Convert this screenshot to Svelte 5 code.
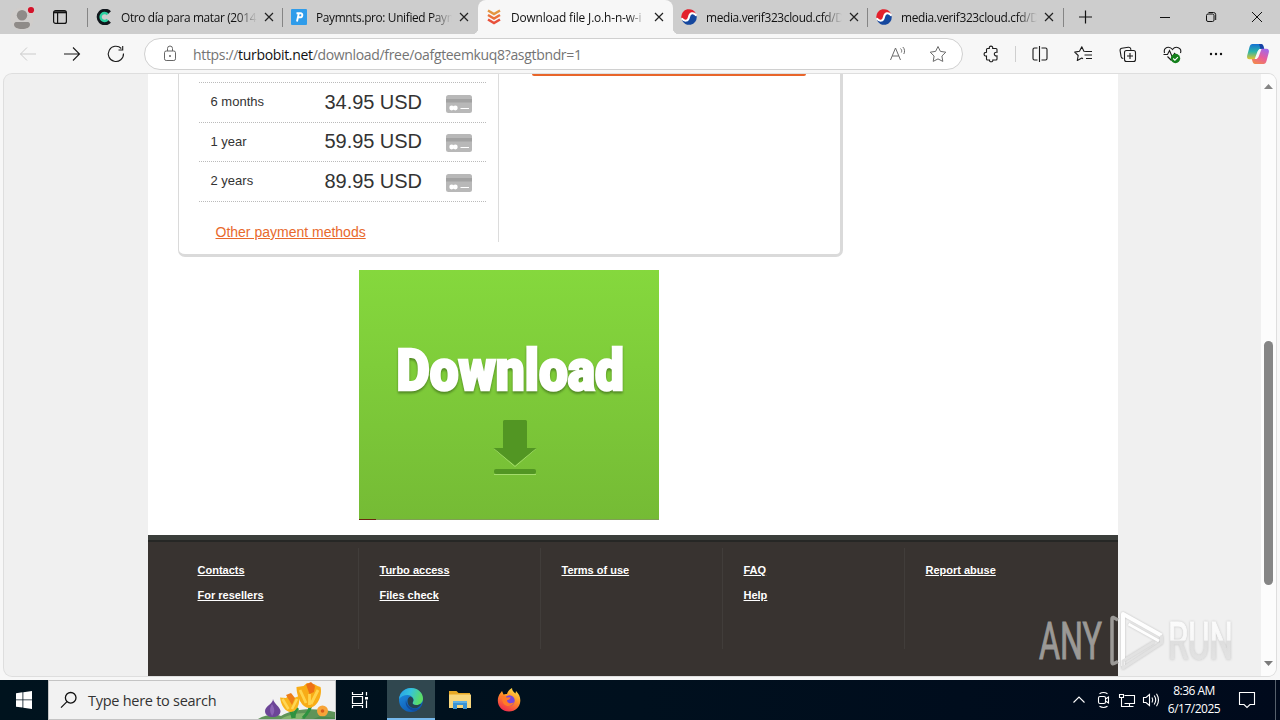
<script>
  const tabs = [
    { icon: 'c', title: 'Otro día para matar (2014', ls: -0.36 },
    { icon: 'p', title: 'Paymnts.pro: Unified Paym', ls: -0.36 },
    { icon: 't', title: 'Download file J.o.h-n-w-i', ls: -0.15, active: true },
    { icon: 'k', title: 'media.verif323cloud.cfd/D', ls: -0.34 },
    { icon: 'k', title: 'media.verif323cloud.cfd/D', ls: -0.34 }
  ];
  const plans = [
    { term: '6 months', price: '34.95 USD' },
    { term: '1 year', price: '59.95 USD' },
    { term: '2 years', price: '89.95 USD' }
  ];
  const footer = [
    ['Contacts', 'For resellers'],
    ['Turbo access', 'Files check'],
    ['Terms of use'],
    ['FAQ', 'Help'],
    ['Report abuse']
  ];
</script>

<div class="screen">
  <header class="tabbar">
    <div class="lead">
      <svg class="avatar" width="28" height="28" viewBox="0 0 28 28">
        <circle cx="14" cy="15" r="11.500" fill="#d0cdcb" />
        <circle cx="14" cy="11.300" r="5.200" fill="#8f8b88" />
        <path d="M6 20.500c0-2 1.500-2.500 3-2.500h10c1.500 0 3 .5 3 2.500 0 3-3.500 4.500-8 4.500s-8-1.500-8-4.500z" fill="#8f8b88" />
        <circle cx="23" cy="6" r="4" fill="#d9cbca" />
        <circle cx="23" cy="6" r="3.100" fill="#d3122a" />
      </svg>
      <svg class="wsp" width="16" height="16" viewBox="0 0 16 16" fill="none" stroke="#111" stroke-width="1.200">
        <rect x="1.600" y="1.600" width="12.800" height="12.800" rx="2" /><path d="M2 3.300h12" stroke-width="2" /><path d="M5.600 4v10" />
      </svg>
    </div>
    {#each tabs as t, i}
      <div class="tab" class:active={t.active} class:line={i < 2 || i === 4} class:last={i === 4}>
        <svg class="fav" width="16" height="16" viewBox="0 0 16 16">
          {#if t.icon === 'c'}
            <path d="M13.500 3.600A6.300 6.300 0 1 0 13.500 12.400" fill="none" stroke="#11171c" stroke-width="4" />
            <path d="M11.600 5.400A4 4 0 1 0 11.600 10.600" fill="none" stroke="#2ccfa0" stroke-width="2.400" />
          {:else if t.icon === 'p'}
            <rect width="16" height="16" rx="1" fill="#2f9cea" />
            <path d="M5.500 4.300h4c2.700 0 2.300 4-.6 4H6.600M7.800 4.200L6 12.500" fill="none" stroke="#fff" stroke-width="1.900" />
          {:else if t.icon === 't'}
            <path d="M2 1.500L8 5l6-3.500" fill="none" stroke="#e3953f" stroke-width="2.500" />
            <path d="M2 6L8 9.500 14 6" fill="none" stroke="#ea7038" stroke-width="2.500" />
            <path d="M2 10.500L8 14l6-3.500" fill="none" stroke="#e8503a" stroke-width="2.500" />
          {:else}
            <path d="M.3 8.500A7.700 7.700 0 0 1 15.200 5.200C12 3 9 4 8 8S3 12.500.3 8.500z" fill="#e3202c" />
            <path d="M15.700 7.500A7.700 7.700 0 0 1 .8 10.800C4 13 7 12 8 8s5-4.500 7.700-.5z" fill="#15479e" />
            <path d="M.7 9.300C4 13.300 7.200 12 8 8s4-5.300 7.400-1.500" fill="none" stroke="#fff" stroke-width="2" />
          {/if}
        </svg>
        <span class="title" style:letter-spacing="{t.ls}px">{t.title}</span>
        <svg class="x" width="12" height="12" viewBox="0 0 12 12" stroke="#222" stroke-width="1.200"><path d="M2 2l8 8M10 2l-8 8" /></svg>
      </div>
    {/each}
    <svg class="plus" width="44" height="34" viewBox="0 0 44 34" stroke="#111" stroke-width="1.200"><path d="M22.500 10.500v13M16 17h13" /></svg>
    <svg class="win" width="46" height="34" viewBox="0 0 46 34" stroke="#111"><path d="M18 17.500h10" /></svg>
    <svg width="46" height="34" viewBox="0 0 46 34" fill="none" stroke="#111"><rect x="18.500" y="14" width="7.500" height="7.500" rx="1.500" /><path d="M20.500 12.500h5a2.200 2.200 0 0 1 2.200 2.200V20" /></svg>
    <svg width="46" height="34" viewBox="0 0 46 34" stroke="#111"><path d="M18 12l10 10M28 12l-10 10" /></svg>
  </header>

  <nav class="toolbar">
    <svg class="b" viewBox="0 0 44 40" stroke="#cbcbcb"><path d="M30 20H14.500M21 13.500L14.500 20l6.500 6.500" /></svg>
    <svg class="b" viewBox="0 0 44 40"><path d="M14 20h15.500M23 13.500l6.500 6.500-6.500 6.500" /></svg>
    <svg class="b" viewBox="0 0 44 40"><path d="M29.500 19.500a7.600 7.600 0 1 1-2.200-5M28.700 12v4h-4.200" /></svg>
    <div class="address">
      <svg class="lock" width="16" height="18" viewBox="0 0 16 18" fill="none" stroke="#666"><rect x="2.500" y="6" width="11" height="9.500" rx="1.700" /><path d="M5.500 6V3.500a2.500 2.500 0 0 1 5 0V6" /><circle cx="8" cy="11" r=".6" fill="#666" /></svg>
      <span class="url">https://<b>turbobit.net</b>/download/free/oafgteemkuq8?asgtbndr=1</span>
      <svg class="ai" width="40" height="30" viewBox="0 0 40 30" fill="none" stroke="#6b6b6b"><path d="M12.500 21l5-12 5 12M14.200 17h6.600M22.500 9.500c1.200 1 1.500 2.700.8 4M24.800 8c1.900 1.700 2.300 4.800 1 7" /></svg>
      <svg class="ai" width="40" height="30" viewBox="0 0 40 30" fill="none" stroke="#6b6b6b"><path d="M20 7.500l2.400 4.900 5.400.8-3.900 3.800.9 5.400-4.800-2.500-4.800 2.500.9-5.400-3.900-3.800 5.400-.8z" stroke-linejoin="round" /></svg>
    </div>
    <svg class="b ext" viewBox="0 0 44 40"><path d="M18.500 14.500h1.800c-.6-3.200 4-3.200 3.400 0h3.300a1 1 0 0 1 1 1v2.800c-3.600-.6-3.600 4.200 0 3.600V25a1 1 0 0 1-1 1h-3.200c.5 2.300-3.800 2.300-3.300 0h-2a1 1 0 0 1-1-1v-3c-3.200.5-3.200-4.200 0-3.700v-2.800a1 1 0 0 1 1-1z" /></svg>
    <i class="vsep"></i>
    <svg class="b" viewBox="0 0 44 40"><path d="M19.500 14h-3a1.500 1.500 0 0 0-1.500 1.500v9a1.500 1.500 0 0 0 1.500 1.500h3M23.500 14h4a1.500 1.500 0 0 1 1.500 1.500v9a1.500 1.500 0 0 1-1.500 1.500h-4M21.500 12v16" /></svg>
    <svg class="b" viewBox="0 0 44 40"><path d="M24.500 17.500l-2.600-.3L19.800 12.700l-2.300 4.600-4.800.8 3.500 3.400-.9 5 4.500-2.400 1.200.7M24 17.500h6M22.500 21h7.500M24 24.500h6" stroke-linejoin="round" /></svg>
    <svg class="b" viewBox="0 0 44 40"><path d="M17.300 24.500c-1.300 0-2-.8-2.200-1.800l-1-6c-.2-1.200.5-2.200 1.700-2.400l6.500-1c1.200-.2 2.300.5 2.500 1.800l.1.700" /><rect x="18.500" y="16.500" width="11" height="11" rx="2" /><path d="M24 19v6M21 22h6" /></svg>
    <svg class="b" viewBox="0 0 44 40"><path d="M21.500 26.500l-4-4M14.500 19c-1.500-6 5-7.500 8-3.500 3-4 9.800-2 8 3.500M13.500 20.500h4l2-4 3 7 2-4 1.500 1.500" /><circle cx="25.500" cy="24.500" r="4.700" fill="#14801c" stroke="none" /><path d="M23.200 24.500l1.700 1.700 3-3" stroke="#fff" /></svg>
    <svg class="b" viewBox="0 0 44 40" stroke="none"><g fill="#111"><circle cx="17" cy="20" r="1.200" /><circle cx="22" cy="20" r="1.200" /><circle cx="27" cy="20" r="1.200" /></g></svg>
    <svg class="cop" width="40" height="40" viewBox="0 0 40 40">
      <defs>
        <linearGradient id="ca" x1="0" y1="0" x2="0" y2="1"><stop offset="0" stop-color="#1470d4" /><stop offset=".5" stop-color="#2bb5a8" /><stop offset="1" stop-color="#e6c52c" /></linearGradient>
        <linearGradient id="cb" x1="0.700" y1="0" x2=".2" y2="1"><stop offset="0" stop-color="#a368e8" /><stop offset=".5" stop-color="#e85c9b" /><stop offset="1" stop-color="#f38a4a" /></linearGradient>
      </defs>
      <path d="M14.500 10h8.500c1.500 0 2 1 2.400 2.200l.8 2.800h-3.200c-1.500 0-2.300.8-2.800 2.200l-2 6.200c-.5 1.300-1.200 1.900-2.700 1.900h-4c-2.300 0-2.800-2-2.300-3.900l2.300-8.500C12 11 13 10 14.500 10z" fill="url(#ca)" />
      <path d="M21 10h2c1.500 0 2 1 2.400 2.200l.8 2.800h-3.700z" fill="#1742a5" />
      <path d="M25.500 30H17c-1.500 0-2-1-2.400-2.200L13.800 25H17c1.500 0 2.300-.8 2.800-2.200l2-6.200c.5-1.300 1.200-1.900 2.700-1.900h4c2.300 0 2.800 2 2.300 3.900l-2.300 8.500c-.5 1.900-1.500 2.900-3 2.900z" fill="url(#cb)" />
      <path d="M19.500 17.500l1.800-2.500h2.200l-3 8-1.800 2h-2z" fill="#f7f7f7" />
    </svg>
  </nav>

  <main class="frame">
    <div class="page">
      <section class="card">
        <div class="plans">
          {#each plans as p}
            <div class="plan">
              <span class="term">{p.term}</span>
              <span class="price">{p.price}</span>
              <svg width="26" height="18" viewBox="0 0 26 18"><rect width="26" height="18" rx="2.500" fill="#b8b8b8" /><path d="M0 4h26v3.500H0z" fill="#a2a2a2" /><circle cx="5.700" cy="13" r="2.400" fill="#fff" /><circle cx="9.300" cy="13" r="2.400" fill="#fff" /><path d="M14.500 13.500H23" stroke="#fff" stroke-width="1.200" /></svg>
            </div>
          {/each}
          <a class="other" href="#methods">Other payment methods</a>
        </div>
        <div class="free"><div class="cta"></div></div>
      </section>

      <div class="banner">
        <svg width="300" height="250" viewBox="0 0 300 250">
          <g class="word" font-family="Roboto, sans-serif" font-weight="900" font-size="57.500" stroke-width="2.600" stroke-linejoin="miter">
            <text x="37.500" y="120" textLength="227.500" lengthAdjust="spacingAndGlyphs" fill="#fff" stroke="#fff">Download</text>
          </g>
          <path d="M135 178.500L156 196.500 177 178.500M135 204.500h42" fill="none" stroke="#a4dc6c" />
          <path d="M145.500 150h21q1.500 0 1.500 1.500V178h9.500L156 195.500 134.500 178H144v-26.500q0-1.500 1.500-1.500z" fill="#529623" />
          <rect x="135" y="199" width="42" height="5" rx="2" fill="#529623" />
          <path d="M0 249.500h300" stroke="#7f9f55" /><path d="M0 249.500h17" stroke="#6b2710" />
        </svg>
      </div>

      <footer>
        {#each footer as col}
          <div class="col">
            {#each col as l}<a href="#{l}">{l}</a>{/each}
          </div>
        {/each}
      </footer>
    </div>
    <div class="scroll">
      <svg width="15" height="24" viewBox="0 0 15 24"><path d="M3 15l4.500-5 4.500 5z" fill="#858585" /></svg>
      <i class="thumb"></i>
      <svg width="15" height="24" viewBox="0 0 15 24"><path d="M3 9l4.500 5L12 9z" fill="#7b7b7b" /></svg>
    </div>
  </main>

  <div class="taskbar">
    <svg width="48" height="40" viewBox="0 0 48 40" fill="#fff"><path d="M16 13.200l6.500-.9v7.200H16zM23.300 12.200L32 11v8.500h-8.700zM16 20.300h6.500v7.300l-6.500-.9zM23.300 20.300H32V29l-8.700-1.200z" /></svg>
    <div class="search">
      <svg width="18" height="18" viewBox="0 0 18 18" fill="none" stroke="#111" stroke-width="1.300"><circle cx="10.700" cy="6.800" r="5.300" /><path d="M7 10.600l-6 6" /></svg>
      <span>Type here to search</span>
      <svg class="flowers" width="80" height="38" viewBox="0 0 80 38">
        <path d="M3 38c8-5 18-5 23-3 10-7 32-9 54-4v7z" fill="#5f9459" />
        <path d="M26 38c8-5 18-6 28-6l-8 6z" fill="#82b56c" />
        <path d="M18 18c0 5-8 7-8 12 0 8 15.500 8 15.500 0C25 25.500 19 23 18 18z" fill="#6c4597" /><path d="M17 23c-3 5-2 8 0 12 3-4 3-7 0-12z" fill="#8a63b4" />
        <path d="M35 26l3 11M56 22c0 6-3 10-8 15M43 27c-3 3-4 7-4 10" stroke="#2e9340" stroke-width="3" fill="none" />
        <g transform="translate(1 0)">
          <path d="M24 16.500l6 .5 3-3 5 3 5-2c1 7-1 15-8 16-6 0-10-7-11-14.500z" fill="#f9b51c" />
          <path d="M30 14l5-2 4 5-3 7z" fill="#ee7d18" /><path d="M26.500 18l6 10M41 18l-5 10" stroke="#ffd654" stroke-width="2.500" />
          <path d="M40.500 6l7-1 3.500-3 7 1 3.500 2 3 1c2 7-2 20-11 21-8 0-13-12-13-21z" fill="#f8ac16" />
          <path d="M50 3.500l5-2.500 4 4-1 6-4.500 2z" fill="#ee7115" /><path d="M44 9l6 13M62 9l-7 14M53.500 13v11" stroke="#ffd34b" stroke-width="2.800" />
        </g>
        <circle cx="67.500" cy="30" r="5.500" fill="#f7a438" /><circle cx="67.500" cy="30" r="1.800" fill="#d85d1c" />
        <path d="M61 37c5-3 12-1 19 0v1H58z" fill="#4a8a4c" />
      </svg>
    </div>
    <svg width="51" height="40" viewBox="0 0 51 40" fill="none" stroke="#fff" stroke-width="1.200"><path d="M16.500 12v2.500h10V12M16.500 28v-2.500h10V28M16.500 16.500h10v7h-10zM30.500 12v3.500M30.500 20.500V28" /><path d="M29 17h3v2.500h-3z" fill="#fff" stroke="none" /></svg>
    <div class="app on">
      <svg width="26" height="26" viewBox="0 0 26 26">
        <defs>
          <linearGradient id="ea" x1="0" y1="0" x2="1" y2=".3"><stop offset="0" stop-color="#259ee8" /><stop offset=".5" stop-color="#35c2dc" /><stop offset="1" stop-color="#5bdc65" /></linearGradient>
          <linearGradient id="eb" x1="0" y1="0" x2="0.600" y2="1"><stop offset="0" stop-color="#2194e6" /><stop offset="1" stop-color="#0d58b0" /></linearGradient>
        </defs>
        <circle cx="13" cy="13" r="12" fill="url(#eb)" />
        <path d="M1 12C2 5 7 1 13 1c7 0 12 5 12 10.500 0 4-3 6.500-6.500 6.500-3 0-4.500-1-3.800-2.400C17 12 14 8 9.500 8 6 8 3 9.500 1 12z" fill="url(#ea)" />
        <path d="M9.500 14c0-2 1-3.700 2.800-4.500 3 1 4 3.700 2.400 6-.7 1.500.8 2.600 3.800 2.600 2 0 4-.8 5-1.600-1 2-3 4-4.700 4.500-5 1-9.300-2-9.300-7z" fill="#27414f" />
        <path d="M8 13c-1.500 6 3 10.500 8 10.800 2 0 4-.6 6-2.800-6 2-13 0-14-8z" fill="#124b9b" />
      </svg>
    </div>
    <div class="app">
      <svg width="24" height="22" viewBox="0 0 24 22"><path d="M1 2h7.500l2 2H22v5H1z" fill="#e7a825" /><path d="M1 5.500h22V19H1z" fill="#f8d67c" /><path d="M5 12h14v8h-4v-4H9v4H5z" fill="#3a93d4" /><path d="M5 12h14v2H5z" fill="#5fb0e4" /></svg>
    </div>
    <div class="app">
      <svg width="24" height="26" viewBox="0 0 24 26">
        <defs><linearGradient id="fa" x1=".8" y1="0" x2=".3" y2="1"><stop offset="0" stop-color="#ffe44a" /><stop offset=".45" stop-color="#ff9326" /><stop offset="1" stop-color="#f0294e" /></linearGradient></defs>
        <path d="M3.500 6L5 4l1.500 3.500C8 6.800 9 6.800 10 7c1-3 3-5 5-6 0 3 2 4 3.500 5.500L19 4c3 3 4.500 6 4.300 10-.3 6-5 10.500-11.300 10.500S.8 20 .8 13.500c0-3 1-5.500 2.700-7.500z" fill="url(#fa)" />
        <circle cx="12.500" cy="13.500" r="5.200" fill="#7647dc" /><path d="M3 9c3-1 5 0 6.500 1.500l4-.3c0 2-2 2.800-3.500 3 0 3 4 4 7 2-1 4-7 5-10 2C5 15 6 12 3 9z" fill="#ff7a28" />
      </svg>
    </div>
    <div class="tray">
      <svg width="24" height="40" viewBox="0 0 24 40"><path d="M6.500 22.500L12 17l5.500 5.500" /></svg>
      <svg width="24" height="40" viewBox="0 0 24 40"><rect x="7.500" y="16.500" width="7" height="7" rx="1.500" /><path d="M14.500 19l3-2v6l-3-2M8.500 13.700q4-2.500 8 0M8.500 26.300q4 2.500 8 0" /></svg>
      <svg width="24" height="40" viewBox="0 0 24 40"><path d="M9.500 15.500h10v8h-10M14.500 23.500v3M10.500 26.500h8M4.500 14.500h4v3h-4zM6.500 17.500v9h4" /></svg>
      <svg width="24" height="40" viewBox="0 0 24 40"><path d="M4.500 17.500H7l3.500-3v11L7 22.500H4.500zM13 17.500q1.500 2.500 0 5M15.200 15.500q3 4.500 0 9M17.500 13.700q4 6.300 0 12.600" /></svg>
      <div class="clock"><span>8:36 AM</span><span>6/17/2025</span></div>
      <svg class="note" width="48" height="40" viewBox="0 0 48 40"><path d="M16.500 12.500h15v12H27l-3 3-3-3h-4.500z" /></svg>
      <i class="peek"></i>
    </div>
  </div>

  <svg class="mark" width="204" height="70" viewBox="0 0 204 70">
    <defs>
      <linearGradient id="wm" gradientUnits="userSpaceOnUse" x1="0" y1="15" x2="0" y2="55"><stop offset="0" stop-color="#fbfbfb" /><stop offset=".48" stop-color="#f8f8f8" /><stop offset=".5" stop-color="#dedede" /><stop offset="1" stop-color="#e3e3e3" /></linearGradient>
    </defs>
    <g font-family="Roboto, sans-serif" font-size="51">
      <text x="2" y="52.500" textLength="63" lengthAdjust="spacingAndGlyphs" fill="#9b9996" stroke="#9b9996" stroke-width="1">ANY</text>
      <text x="131" y="52.500" textLength="65" lengthAdjust="spacingAndGlyphs" fill="url(#wm)" stroke="url(#wm)" stroke-width="1" class="run">RUN</text>
    </g>
    <path d="M81 14L76.500 11.500Q75 11 75 13v43q0 2.500 2 1.500l4-2" fill="none" stroke="#9b9996" stroke-width="3.500" />
    <g class="play" fill="none" stroke-linejoin="round" stroke-width="4">
      <path d="M86 60V8l38.500 21.500" stroke="#fff" />
      <path d="M91.500 18L122 35" stroke="#fff" stroke-width="3" />
      <path d="M124.500 29.500v7.500L86 62v-7l31-19" stroke="#e2e2e2" stroke-width="3" />
    </g>
  </svg>
</div>

<style>
  :global(body) { margin: 0; overflow: hidden; }
  .screen { width: 1280px; height: 720px; display: flex; flex-direction: column; position: relative; overflow: hidden; background: #f7f7f7; font-family: 'Open Sans', 'Noto Sans', sans-serif; }
  svg { display: block; flex: none; }
  .tabbar { height: 34px; flex: none; background: #cdcdcd; display: flex; }
  .lead { width: 88px; flex: none; display: flex; align-items: center; gap: 16px; padding-left: 8px; box-sizing: border-box; }
  .avatar { margin-top: 1px; }
  .tab { width: 195px; flex: none; box-sizing: border-box; display: flex; align-items: center; padding-left: 8px; position: relative; }
  .tab.line::before, .tab.last::after { content: ''; position: absolute; left: -1px; top: 8px; width: 1px; height: 19px; background: #858585; }
  .tab.last::after { left: 195px; }
  .tab.active { background: #f7f7f7; border-radius: 8px 8px 0 0; }
  .tab.active::before, .tab.active::after { content: ''; position: absolute; bottom: 0; width: 6px; height: 6px; }
  .tab.active::before { left: -6px; background: radial-gradient(circle at 0 0, #cdcdcd 6px, #f7f7f7 6.500px); }
  .tab.active::after { right: -6px; background: radial-gradient(circle at 100% 0, #cdcdcd 6px, #f7f7f7 6.500px); }
  .title { margin-left: 9px; width: 136px; font-size: 11.900px; line-height: 16px; color: #111; white-space: nowrap; -webkit-mask-image: linear-gradient(90deg, #000 116px, transparent 136px); }
  .x { margin-left: 5.500px; }
  .win { margin-left: auto; }
  .toolbar { height: 40px; flex: none; display: flex; align-items: center; padding-left: 6px; box-sizing: border-box; background: #f7f7f7; }
  .b { width: 44px; height: 40px; fill: none; }
  .b:not([stroke]) { stroke: #1b1b1b; stroke-width: 1.100; }
  .address { width: 819px; height: 32px; margin-left: 6px; box-sizing: border-box; border: 1px solid #d0d0d0; border-radius: 16px; background: #fff; display: flex; align-items: center; flex: none; padding: 0 4px 0 17px; }
  .url { margin-left: 15px; font-size: 14px; color: #747474; flex: 1; white-space: nowrap; letter-spacing: -.33px; }
  .url b { font-weight: 400; color: #111; }
  .ext { margin-left: 6px; }
  .vsep { width: 1px; height: 16px; background: #cfcfcf; margin: 0 2px; flex: none; }
  .frame { height: 602px; flex: none; margin: 0 4px 4px; display: flex; background: #f0f0f0; border-radius: 8px; overflow: hidden; box-shadow: 0 0 0 1px #dedede; }
  .page { width: 970px; margin-left: 144px; background: #fff; display: flex; flex-direction: column; }
  .card { width: 665px; height: 183px; margin-left: 30px; box-sizing: border-box; display: flex; border: solid #dadada; border-width: 0 3px 3px 1px; border-radius: 0 0 7px 7px; font-family: 'Liberation Sans', Arial, sans-serif; flex: none; }
  .plans { width: 320px; height: 168px; box-sizing: border-box; border-right: 1px solid #dcdcdc; padding: 8px 12px 0 20px; color: #333; }
  .plan { height: 39.600px; box-sizing: border-box; border-top: 1px dotted #bbb; display: flex; align-items: center; padding: 0 14px 0 11.500px; width: 287px; }
  .term { width: 114px; font-size: 13px; margin-top: -1px; }
  .price { flex: 1; font-size: 20px; letter-spacing: -.05px; }
  .plan svg { margin-top: 3px; }
  .other { display: block; border-top: 1px dotted #bbb; width: 270.500px; font-size: 14px; line-height: 20px; color: #e8692c; padding: 20px 0 0 16.500px; text-decoration: underline; }
  .cta { width: 274px; height: 2px; margin-left: 33px; background: #e8652a; border-radius: 0 0 5px 5px; }
  .banner { width: 300px; height: 250px; margin: 13px 0 15px 211px; flex: none; background: linear-gradient(#85d83d, #75bb35); }
  .word { filter: drop-shadow(0 2px 1px rgba(50, 90, 20, .6)); }
  footer { height: 141px; flex: none; background: #383330; box-sizing: border-box; border-top: 5px solid #3b3e3b; box-shadow: inset 0 2px #262725; display: flex; padding: 8px 0 0 29px; font-family: 'Liberation Sans', Arial, sans-serif; }
  .col { width: 182px; height: 101px; box-sizing: border-box; border-right: 1px solid #413d3a; padding: 15px 0 0 20.500px; display: flex; flex-direction: column; gap: 11px; }
  .col:last-child { border: 0; }
  .col a { color: #fff; font: bold 11px/14px 'Liberation Sans', Arial, sans-serif; }
  .scroll { width: 15px; margin-left: auto; background: #fcfcfc; display: flex; flex-direction: column; align-items: center; }
  .thumb { width: 9px; height: 244px; margin-top: 243px; margin-bottom: auto; border-radius: 5px; background: #858585; flex: none; }
  .taskbar { height: 40px; flex: none; display: flex; background: linear-gradient(90deg, #00131e, #00101e 50%, #000a1c); }
  .search { width: 288px; flex: none; box-sizing: border-box; background: #f2f2f2; border: 1px solid #c4c4c4; display: flex; align-items: center; padding-left: 11px; position: relative; overflow: hidden; }
  .search span { margin-left: 10px; font-size: 14.500px; letter-spacing: -.27px; color: #333; white-space: nowrap; }
  .flowers { margin-left: auto; }
  .app { width: 49px; display: flex; align-items: center; justify-content: center; box-sizing: border-box; }
  .on { width: 48px; background: #30474f; border-bottom: 2px solid #76b9ed; padding-top: 2px; }
  .tray { margin-left: auto; display: flex; fill: none; stroke: #fff; stroke-width: 1.100; }
  .clock { width: 62px; display: flex; flex-direction: column; text-align: center; color: #fff; font-size: 12px; line-height: 18px; padding-top: 2px; letter-spacing: -.5px; }
  .note { margin-left: -2px; }
  .peek { width: 4px; border-left: 1px solid #56606c; margin-left: 4px; }
  .mark { position: absolute; left: 1037px; top: 606px; }
  .run { filter: drop-shadow(0 0 1px #c4c4c4); }
  .play { filter: drop-shadow(0 0 1px #bbb); opacity: .95; }
</style>
